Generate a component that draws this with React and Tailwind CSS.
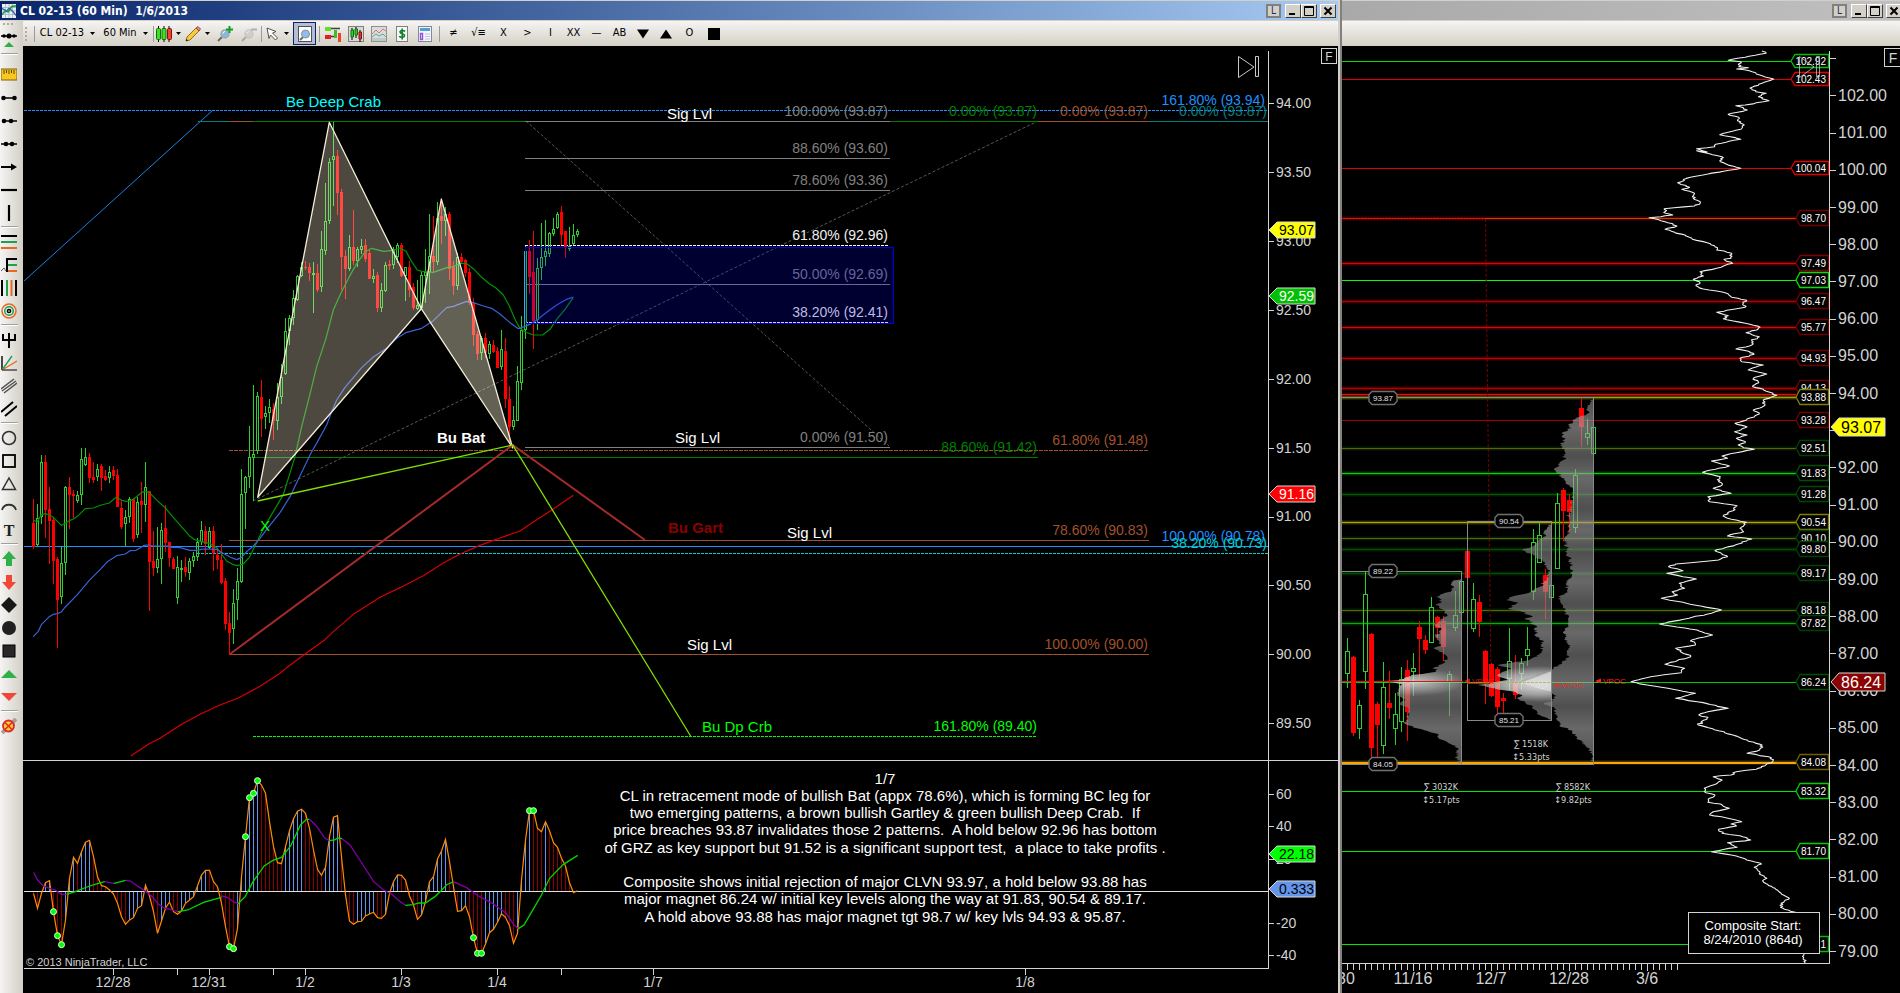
import React from "react";

/* ---------------------------------------------------------------- data */

// Hourly candles: direction, high, low, body top, body bottom (thirds of a pixel).
const EARLY = `r 297 447 370 440|g 313 438 353 435|g 165 372 185 350|r 165 415 185 330|r 262 492 328 362|r 350 552 360 483|r 472 745 478 600|g 440 612 490 592|g 257 525 262 490|r 231 388 262 286|r 270 355 282 288|g 273 310 286 304|g 144 315 178 286|g 144 197 172 196|r 160 250 171 234|r 185 248 231 240|g 192 243 206 232|r 192 273 198 234|r 210 243 228 240|g 198 250 217 234|r 198 240 210 228|r 207 320 225 321|r 300 388 324 380|g 330 438 352 373|g 292 370 297 352|r 294 426 297 417|g 290 415 307 406|r 246 398 303 315|g 186 366 262 315|r 273 632 273 486|r 393 528 483 504|g 381 518 478 503|g 370 552 390 478|r 316 456 384 430|r 425 502 426 473|r 470 508 478 507|g 468 612 502 593|g 480 546 503 505|r 472 530 500 515|g 475 540 484 518|g 455 500 468 484|g 415 482 425 470|g 363 435 390 425|r 378 465 392 432|g 382 448 394 444|r 378 513 394 460|r 445 507 465 480|r 432 552 480 549|r 534 690 543 672|r 635 765 670 699|g 567 732 610 688|g 504 660 544 601|g 208 550 283 547|g 228 388 230 280|g 78 265 172 232`;
const LATE = `g 915 1263 1121 1133|g 937 1123 949 1114|r 900 1070 951 1018|g 978 1047 1000 1012|g 957 1030 982 1000|r 968 1080 986 1022|g 910 1050 952 1024|g 852 972 892 952|g 714 885 754 883|g 705 795 714 754|g 630 735 655 715|g 585 662 587 660|g 547 592 560 587|r 543 570 560 564|r 548 603 562 580|g 547 698 578 582|r 552 635 578 630|g 453 635 508 620|g 309 524 424 512|g 235 432 247 424|g 125 378 229 239|r 210 405 228 338|r 327 630 336 530|r 510 657 528 568|g 465 572 501 567|r 390 556 501 543|g 502 562 508 542|g 477 523 499 509|r 477 545 494 537|r 508 597 518 597|g 567 608 588 596|r 575 695 585 683|g 609 695 630 683|g 546 636 555 634|r 540 570 553 557|g 500 567 506 554|g 490 549 495 530|r 490 590 495 587|g 560 662 562 587|r 543 650 562 629|r 608 690 621 684|g 600 690 676 686|g 577 685 586 684|g 507 668 576 587|g 402 641 529 577|r 408 575 528 546|g 366 555 415 547|r 357 492 407 422|g 380 468 402 424|r 397 600 402 566|r 543 645 561 618|g 520 630 530 617|r 520 552 531 546|r 537 590 540 578|r 564 675 576 668|r 654 798 668 765|r 753 839 762 822|g 768 840 774 820|r 760 835 774 820|g 783 836 793 821|r 780 818 795 816|r 801 864 813 864|g 750 869 808 860|r 774 985 812 958|r 918 1092 957 1042|g 978 1049 1021 1040|g 857 1022 904 1022|g 708 930 751 908|g 498 778 514 750|r 480 641 514 591|r 453 807 577 723|g 535 750 564 721|g 429 600 532 563|g 420 558 513 532|g 455 531 458 521|g 414 468 447 463|g 396 447 403 443|r 378 495 396 465|r 452 534 454 500|g 441 513 499 508|g 432 495 466 491|g 447 470 454 466`;
const DAILY = `g 773 924 813 883|r 827 1068 830 1058|g 960 1077 976 1048|g 575 927 643 877|r 758 1135 762 1103|r 965 1135 971 1036|g 847 1122 922 1099|r 872 1018 969 984|g 940 1095 1003 1048|g 862 1056 897 1027|r 840 1083 870 995|g 818 947 864 875|r 724 893 741 777|r 765 821 780 809|g 652 790 682 788|r 707 780 711 744|r 709 843 723 800|g 873 1007 882 906|g 634 752 706 745|g 592 712 604 700|r 447 627 513 595|g 609 757 658 748|r 646 770 666 726|r 810 971 813 905|r 848 952 852 948|r 860 1003 867 981|r 940 1000 953 962|g 744 930 843 898|r 826 957 906 945|g 834 931 850 883|g 741 857 808 827|g 447 659 487 637|g 427 550 465 548|r 568 717 585 635|g 612 660 616 655|g 340 567 370 566|r 324 483 330 393|r 342 453 360 395|g 267 458 286 443|r 53 200 83 140|g 117 195 160 175|g 131 239 142 223`;

const OSC = [460, 505, 460, 428, 422, 515, 587, 614, 540, 415, 352, 370, 335, 307, 301, 350, 410, 437, 440, 450, 462, 490, 530, 553, 540, 533, 505, 497, 436, 468, 515, 580, 543, 505, 486, 515, 523, 513, 490, 480, 470, 438, 405, 391, 391, 425, 440, 490, 560, 620, 626, 565, 410, 290, 173, 160, 122, 135, 160, 245, 320, 368, 371, 320, 272, 236, 214, 208, 220, 265, 330, 388, 406, 382, 290, 232, 227, 350, 465, 543, 553, 545, 544, 528, 522, 517, 533, 535, 523, 460, 425, 405, 406, 420, 468, 495, 538, 525, 485, 425, 410, 357, 333, 298, 365, 440, 514, 512, 497, 530, 593, 640, 640, 612, 578, 568, 547, 521, 532, 557, 610, 580, 420, 300, 212, 212, 265, 275, 245, 272, 308, 322, 355, 378, 428, 458, 452];
const OSC_DOTS = [5, 6, 7, 49, 50, 53, 54, 55, 56, 110, 111, 112, 124, 125];

const TREND = [
  ["#8000a8", "85,397 95,420 108,436 125,445 140,450 155,463 168,463"],
  ["#00d800", "168,463 190,455 220,441 240,433 265,425"],
  ["#8000a8", "265,425 288,430"],
  ["#00d800", "288,430 318,421"],
  ["#8000a8", "318,421 330,423 350,440 370,455 385,470 400,492 415,504 430,508 450,515"],
  ["#00d800", "450,515 475,510 515,487 560,472"],
  ["#8000a8", "560,468 575,472 590,485 602,491"],
  ["#00d800", "602,491 620,470 640,425 668,378 690,361 712,352 735,318 760,255 775,238 783,238"],
  ["#8000a8", "783,238 800,258 822,295 833,302"],
  ["#00d800", "833,302 845,300 855,294 865,296"],
  ["#8000a8", "865,296 885,315 910,360 945,425 970,450 990,462 1010,483 1025,496"],
  ["#00d800", "1025,496 1045,494 1060,489 1076,489 1100,470 1115,453 1130,434 1147,425"],
  ["#8000a8", "1147,425 1180,443 1210,468 1245,490 1280,520 1300,555 1311,566"],
  ["#00d800", "1311,566 1325,555 1345,515 1368,468 1390,415 1425,373 1461,346"],
];

const GRAY = "#808080";
const SIENNA = "#a0522d";
const GREEN = "#008000";
const TEAL = "#008080";
const DODGER = "#1e90ff";
const CYAN = "#00ced1";
const LIME = "#00ff00";

// Horizontal levels: x1, x2, y, colour, dash
const LEVELS = [
  [24, 1268, 110, DODGER, "3 1"],
  [198, 229, 121, TEAL],
  [229, 253, 121, SIENNA],
  [253, 525, 121, GREEN],
  [525, 890, 121, GRAY],
  [890, 1038, 121, GREEN],
  [1038, 1149, 121, SIENNA],
  [1149, 1268, 121, TEAL],
  [525, 890, 158, GRAY],
  [525, 890, 190, GRAY],
  [525, 888, 245, "#ffffff", "3 1"],
  [525, 890, 284, GRAY],
  [525, 888, 322, "#ffffff", "3 1"],
  [525, 890, 447, GRAY],
  [229, 1149, 450, SIENNA, "4 1"],
  [253, 1038, 457, GREEN],
  [229, 1149, 540, SIENNA],
  [24, 1268, 546, DODGER],
  [197, 1268, 553, CYAN, "3 1"],
  [230, 1149, 654, SIENNA],
  [253, 1037, 736, LIME, "3 1"],
];

const LEVEL_LABELS = [
  [1265, 105, DODGER, "161.80% (93.94)"],
  [888, 116, GRAY, "100.00% (93.87)"],
  [1037, 116, GREEN, "0.00% (93.87)"],
  [1148, 116, SIENNA, "0.00% (93.87)"],
  [1267, 116, TEAL, "0.00% (93.87)"],
  [888, 153, GRAY, "88.60% (93.60)"],
  [888, 185, GRAY, "78.60% (93.36)"],
  [888, 240, "#f0f0f0", "61.80% (92.96)"],
  [888, 279, "#66669a", "50.00% (92.69)"],
  [888, 317, "#bcbce4", "38.20% (92.41)"],
  [888, 442, GRAY, "0.00% (91.50)"],
  [1037, 452, GREEN, "88.60% (91.42)"],
  [1148, 445, SIENNA, "61.80% (91.48)"],
  [1148, 535, SIENNA, "78.60% (90.83)"],
  [1265, 541, DODGER, "100.00% (90.78)"],
  [1267, 548, CYAN, "38.20% (90.73)"],
  [1148, 649, SIENNA, "100.00% (90.00)"],
  [1037, 731, LIME, "161.80% (89.40)"],
];

const NOTES = [
  [286, 107, "#00ffff", "Be Deep Crab"],
  [667, 119, "#ffffff", "Sig Lvl"],
  [675, 443, "#ffffff", "Sig Lvl"],
  [787, 538, "#ffffff", "Sig Lvl"],
  [687, 650, "#ffffff", "Sig Lvl"],
  [437, 443, "#ffffff", "Bu Bat", true],
  [668, 533, "#8b0000", "Bu Gart", true],
  [702, 732, LIME, "Bu Dp Crb"],
  [260, 531, LIME, "X"],
];

const COMMENT = [
  [784, "1/7"],
  [801, "CL in retracement mode of bullish Bat (appx 78.6%), which is forming BC leg for"],
  [818, "two emerging patterns, a brown bullish Gartley & green bullish Deep Crab.\u00a0 If"],
  [835, "price breaches 93.87 invalidates those 2 patterns.\u00a0 A hold below 92.96 has bottom"],
  [853, "of GRZ as key support but 91.52 is a significant support test,\u00a0 a place to take profits ."],
  [887, "Composite shows initial rejection of major CLVN 93.97, a hold below 93.88 has"],
  [904, "major magnet 86.24 w/ initial key levels along the way at 91.83, 90.54 & 89.17."],
  [922, "A hold above 93.88 has major magnet tgt 98.7 w/ key lvls 94.93 & 95.87."],
];

// Composite levels: y, price, line colour, glow colour, tag colour
const COMPOSITE = [
  [61, "102.92", "#00e000", null, "#00c000"],
  [79, "102.43", "#e00000", null, "#e00000"],
  [168, "100.04", "#e00000", null, "#e00000"],
  [218, "98.70", "#a85000", "#700000", "#700000"],
  [263, "97.49", "#e00000", "#700000", "#800000"],
  [280, "97.03", "#00ff00", null, "#00e000"],
  [301, "96.47", "#b00000", "#600000", "#700000"],
  [327, "95.77", "#e80000", "#600000", "#700000"],
  [358, "94.93", "#c00000", "#600000", "#700000"],
  [388, "94.13", "#b00000", "#700000", "#700000"],
  [394, null, "#ff0000", "#500000", null],
  [397, "93.88", "#a8a000", "#606000", "#808000"],
  [420, "93.28", "#a00000", null, "#700000"],
  [448, "92.51", "#6a5c00", "#003000", "#004000"],
  [473, "91.83", "#00d800", "#005000", "#005000"],
  [494, "91.28", "#005c00", "#003000", "#004800"],
  [522, "90.54", "#b0a800", "#505000", "#808000"],
  [538, "90.10", "#6a5c00", "#003000", "#004000"],
  [549, "89.80", "#005000", "#003000", "#004000"],
  [573, "89.17", "#005000", "#003000", "#004000"],
  [610, "88.18", "#6a5c00", "#003000", "#004000"],
  [623, "87.82", "#00b000", "#004000", "#004000"],
  [682, "86.24", "#00d000", null, "#005000"],
  [762, "84.08", "#ffa500", "#605000", "#706000"],
  [791, "83.32", "#00e800", null, "#00d000"],
  [851, "81.70", "#00e800", null, "#00d000"],
  [944, "79.21", "#00e800", null, "#00c000"],
];

// Volume profile outlines: x, y pairs, in the candle pane's drawing units.
const PROFILES = [
  [340, "340,595 315,605 310,635 270,650 285,665 268,675 290,690 300,705 275,725 262,735 285,745 268,770 285,795 262,805 290,818 300,835 290,850 265,862 270,875 200,885 170,900 130,903 170,912 165,935 160,945 185,960 165,972 190,985 195,1005 180,1030 215,1045 275,1062 275,1072 300,1085 315,1095 330,1110 325,1130 335,1150"],
  [593, "593,430 575,450 568,475 545,495 510,510 540,525 570,545 585,570 580,595 560,620 530,638 480,650 465,660 500,668 470,685 510,695 540,710 520,715 545,735 550,770 570,785 560,820 530,840 440,855 480,865 440,885 470,900 385,915 430,925 490,935 510,945 495,955 540,980 560,1005 593,1020"],
  [709, "709,55 695,80 690,105 650,120 640,150 620,160 630,185 615,190 630,215 625,240 600,270 620,290 640,315 655,330 650,365 640,400 640,450 630,480 640,530 650,570 640,600 630,640 612,650 630,690 640,720 640,740 625,755 640,800 635,840 590,870 550,885 505,905 520,915 570,925 600,945 590,965 570,970 600,985 610,1010 615,1035 650,1055 670,1080 690,1100 705,1120 707,1150"],
];

const curve = (text, ox, oy, sx, sy) =>
  text.split(" ").map((p) => {
    const [x, y] = p.split(",").map(Number);
    return [ox + x / sx, oy + y / sy];
  });

const COMPOSITE_CURVE = [
  ...curve("1240,153 1250,160 1200,172 1160,181 1190,185 1185,200 1208,203 1180,207 1210,212 1235,225 1268,237 1240,250 1212,264 1225,275 1250,280 1232,290 1257,302 1200,315 1178,317 1205,330 1160,343 1185,352 1182,362 1198,375 1190,388 1160,397 1140,404 1165,410 1190,418 1130,433 1128,440 1085,446 1110,456 1085,452 1145,470 1140,482 1155,492 1190,505 1100,525 1070,532 1040,548 1068,562 1050,568 1080,580 1075,590 1094,607 1080,618 1008,626 1012,640 1028,645 1000,650 972,653 1010,665 1038,678 1010,688 1060,708 1075,718 1110,728", 1240, 0, 2.376, 3),
  ...curve("345,170 350,180 372,183 395,190 393,205 372,208 398,220 350,235 300,245 310,258 280,268 300,278 288,287 310,297 350,303 385,312 395,322 440,331 430,340 435,352 350,367 385,377 370,386 400,393 450,403 480,411 470,420 438,428 478,440 455,452 455,465 408,477 450,485 462,493 420,505 425,515 490,525 445,540 500,552 460,565 475,575 458,590 490,598 530,616 490,630 495,645 460,660 478,672 440,690", 1600, 190, 3, 3),
  ...curve("1106,130 1140,140 1105,155 1140,165 1110,175 1135,185 1115,195 1130,203 1160,208 1110,218 1070,228 1085,235 1040,243 1090,258 1060,265 1015,277 1065,290 1060,305 1070,315 1045,325 1095,340 1030,350 1035,365 1112,377 1100,392 1075,405 1085,415 1138,427 1120,445 1130,455 1085,468 1153,477 1115,492 1050,512 1085,530 1060,540 940,552 920,560 960,572 915,580 960,590 998,597 950,610 965,625 930,635 945,645 900,655 970,670 1068,690 1040,700 895,732 1000,750 1043,765 985,780 995,795 940,805 982,830 910,853 965,865 955,878 870,890 815,905 860,915 900,922 995,940 940,955 1000,965 1087,985 1030,995 1005,1005 1030,1012 1003,1035 1060,1052 1100,1065 1130,1078 1182,1095 1175,1110 1140,1120 1200,1130 1212,1142 1190,1157 1165,1168 1110,1175 1095,1185", 1340, 380, 2.8, 3),
  ...curve("1045,110 1070,120 1045,135 1020,145 1025,158 1050,165 1035,175 1030,187 1065,192 1090,205 1045,215 1035,225 1080,233 1125,245 1095,252 1110,258 1060,268 1070,280 1120,287 1150,300 1085,308 1112,322 1040,335 1095,345 1135,357 1180,372 1160,382 1175,395 1180,405 1195,415 1185,425 1218,445 1235,460 1258,475 1235,490 1240,505 1275,517 1300,640 1297,655 1303,668", 1340, 740, 2.8, 3),
];

/* ------------------------------------------------------------- helpers */

const noise = (n) => {
  const v = Math.sin(n * 12.9898) * 43758.5453;
  return (v - Math.floor(v)) * 2 - 1;
};

const roughen = (points, amount) => {
  const out = [];
  for (let i = 0; i < points.length - 1; i++) {
    const [x1, y1] = points[i];
    const [x2, y2] = points[i + 1];
    const steps = Math.max(1, Math.round(Math.abs(y2 - y1)));
    for (let s = 0; s < steps; s++) {
      const t = s / steps;
      const jitter = s === 0 ? 0 : noise(i * 31 + s) * amount;
      out.push([x1 + (x2 - x1) * t + jitter, y1 + (y2 - y1) * t]);
    }
  }
  out.push(points[points.length - 1]);
  return out;
};

const toPoints = (pts) => pts.map(([x, y]) => `${x.toFixed(1)},${y.toFixed(1)}`).join(" ");

const parse = (text) =>
  text.split("|").map((row) => {
    const [dir, ...n] = row.split(" ");
    return [dir === "g", ...n.map(Number)];
  });

function Candles({ data, x0, step, top, half }) {
  return parse(data).map(([up, h, l, t, b], i) => {
    const x = Math.round(x0 + step * i);
    const y = (v) => Math.round(top + v / 3);
    const bodyTop = y(t);
    const bodyH = Math.max(1, y(b) - bodyTop);
    const color = up ? "#32cd32" : "#ff0000";
    return (
      <g key={i} shapeRendering="crispEdges">
        {up ? (
          <>
            <rect x={x} y={y(h)} width="1" height={Math.max(0, bodyTop - y(h))} fill={color} />
            <rect x={x} y={y(b)} width="1" height={Math.max(0, y(l) - y(b))} fill={color} />
            <rect x={x - half + 0.5} y={bodyTop + 0.5} width={half * 2} height={Math.max(1, bodyH - 1)} fill="none" stroke={color} />
          </>
        ) : (
          <>
            <rect x={x} y={y(h)} width="1" height={Math.max(1, y(l) - y(h))} fill={color} />
            <rect x={x - half} y={bodyTop} width={half * 2 + 1} height={bodyH} fill={color} />
          </>
        )}
      </g>
    );
  });
}

function Flag({ x, y, width, half, fill, text, color, size }) {
  return (
    <g>
      <polygon
        points={`${x},${y} ${x + 8},${y - half} ${x + width},${y - half} ${x + width},${y + half} ${x + 8},${y + half}`}
        fill={fill}
        stroke="#d8d8d8"
      />
      <text x={x + 10} y={y + Math.round(size * 0.36)} fontSize={size} fill={color}>{text}</text>
    </g>
  );
}

/* -------------------------------------------------------- main chart */

function HourlyChart() {
  const oscX = (i) => 33 + i * 4;
  const oscY = (v) => 740 + v / 3;
  return (
    <svg viewBox="23 46 1315 947" className="block h-auto w-full bg-black font-['Liberation_Sans',Arial,sans-serif]" role="img" aria-label="CL 02-13 60 minute chart">
      {/* fibonacci anchors */}
      <g stroke="#585858" strokeDasharray="3 2" fill="none">
        <path d="M253 501 1038 121M526 121 889 446" />
      </g>
      <path d="M24 281 213 110" stroke="#1e80e0" />

      <g shapeRendering="crispEdges">
        {LEVELS.map(([x1, x2, y, c, dash], i) => (
          <line key={i} x1={x1} x2={x2} y1={y + 0.5} y2={y + 0.5} stroke={c} strokeDasharray={dash} />
        ))}
      </g>

      <Candles data={EARLY} x0={33} step={4} top={400} half={1} />
      <Candles data={LATE} x0={253} step={4} top={80} half={1} />

      {/* moving averages */}
      <g fill="none" strokeWidth="3.6" strokeLinejoin="round">
        <g transform="translate(0 400) scale(.33333)">
          <polyline stroke="#009400" points="100,362 112,365 124,344 136,341 148,345 160,352 184,376 196,370 208,362 220,357 232,349 256,326 280,324 304,315 328,309 348,292 364,300 376,304 388,303 400,298 424,278 436,274 448,278 472,302 496,324 520,352 544,380 568,407 582,418 604,425 628,430 650,443 664,462 680,483 700,494 712,497 730,492 748,472 772,424 790,386 850,284 885,170 905,80 928,-10 950,-100 978,-185 1000,-270 1020,-315 1048,-370 1072,-412 1096,-445 1115,-455 1150,-446 1180,-449 1200,-456 1218,-446 1235,-415 1252,-390 1265,-386 1300,-383 1340,-397 1360,-400 1380,-410 1400,-409 1420,-394 1445,-368 1468,-349 1488,-336 1510,-315 1528,-282 1546,-240 1560,-215 1576,-204 1600,-195 1628,-195 1650,-212 1670,-242 1695,-272 1720,-308" />
          <polyline stroke="#3a62d4" points="100,710 115,694 124,674 148,650 160,643 172,641 184,636 196,621 232,584 268,541 304,505 322,485 350,467 376,462 390,452 408,451 420,444 432,436 445,435 460,438 480,438 505,438 515,442 540,443 570,451 590,451 610,447 650,448 664,457 690,471 710,479 724,473 740,455 760,438 780,415 800,388 840,338 870,290 895,238 930,165 958,115 980,75 995,35 1010,0 1035,-38 1060,-67 1085,-97 1120,-129 1160,-155 1190,-185 1220,-203 1265,-215 1300,-238 1340,-277 1360,-281 1400,-296 1420,-292 1450,-282 1475,-275 1500,-258 1530,-232 1555,-214 1575,-221 1600,-232 1640,-263 1670,-285 1700,-302 1720,-309" />
          <polyline stroke="#d80000" points="392,1068 445,1033 480,1015 545,973 600,943 660,915 715,894 780,859 840,820 860,803 920,758 975,719 1000,695 1060,643 1140,592 1200,563 1270,527 1330,489 1380,462 1440,436 1500,414 1560,393 1600,366 1660,327 1720,286" />
        </g>
      </g>

      {/* harmonic patterns */}
      <g stroke="#f4ecd4" strokeWidth="1.3" strokeLinejoin="round">
        <polygon points="257.7,497.3 329.3,122.3 421.3,308.7" fill="#fff3d8" fillOpacity=".3" />
        <polygon points="421.3,308.7 441.3,199 512.7,448" fill="#fff8d8" fillOpacity=".39" />
      </g>
      <polyline points="230,654 512.7,445 645,540" fill="none" stroke="#a52a2a" strokeWidth="2" />
      <polyline points="257.7,501 512.7,445 690.6,736" fill="none" stroke="#80e000" strokeWidth="1.3" />

      <rect x="525.5" y="247.5" width="368" height="76" fill="#0000ff" fillOpacity=".19" stroke="#0000e0" />

      <g fontSize="14">
        {LEVEL_LABELS.map(([x, y, c, t], i) => (
          <text key={i} x={x} y={y} fill={c} textAnchor="end">{t}</text>
        ))}
      </g>
      <g fontSize="15">
        {NOTES.map(([x, y, c, t, bold], i) => (
          <text key={i} x={x} y={y} fill={c} fontWeight={bold ? 700 : 400}>{t}</text>
        ))}
      </g>

      {/* oscillator */}
      <g shapeRendering="crispEdges">
        {OSC.map((v, i) => {
          const y = Math.round(oscY(v));
          const rising = i > 0 && v < OSC[i - 1];
          return (
            <rect key={i} x={oscX(i)} y={Math.min(y, 891)} width="1" height={Math.abs(y - 891)} fill={rising ? "#6495ed" : "#8b0000"} />
          );
        })}
        <path d="M24 891.5H1269" stroke="#e0e0e0" />
      </g>
      <polyline points={OSC.map((v, i) => `${oscX(i) + 0.5},${oscY(v).toFixed(1)}`).join(" ")} fill="none" stroke="#ff8c00" strokeWidth="1.2" />
      <g transform="translate(0 740) scale(.39541 .33333)" fill="none">
        {TREND.map(([c, p], i) => (
          <polyline key={i} points={p} stroke={c} strokeWidth="1.3" vectorEffect="non-scaling-stroke" />
        ))}
      </g>
      {OSC_DOTS.map((i) => (
        <circle key={i} cx={oscX(i) + 0.5} cy={oscY(OSC[i])} r="3" fill="#00ff00" stroke="#e0ffe0" />
      ))}
      <g fontSize="15" fill="#ffffff" textAnchor="middle">
        {COMMENT.map(([y, t]) => (
          <text key={y} x="885" y={y}>{t}</text>
        ))}
      </g>

      {/* axes */}
      <g stroke="#d3d3d3" shapeRendering="crispEdges" fill="none">
        <path d="M23 760.5H1338M24 968.5H1269M1268.5 51V969" />
        {[103, 172, 241, 310, 379, 448, 517, 585, 654, 723, 794, 826, 859, 923, 955].map((y) => (
          <path key={y} d={`M1269 ${y + 0.5}h5`} />
        ))}
        {[113, 177, 209, 273, 305, 401, 497, 561, 653, 1025].map((x) => (
          <path key={x} d={`M${x + 0.5} 969v6`} />
        ))}
      </g>
      <g fontSize="14" fill="#d3d3d3">
        {["94.00", "93.50", "93.00", "92.50", "92.00", "91.50", "91.00", "90.50", "90.00", "89.50"].map((t, i) => (
          <text key={t} x="1276" y={108 + Math.round(i * 68.9)}>{t}</text>
        ))}
        {[[799, "60"], [831, "40"], [864, "20"], [928, "-20"], [960, "-40"]].map(([y, t]) => (
          <text key={t} x="1276" y={y}>{t}</text>
        ))}
        <g textAnchor="middle">
          {[[113, "12/28"], [209, "12/31"], [305, "1/2"], [401, "1/3"], [497, "1/4"], [653, "1/7"], [1025, "1/8"]].map(([x, t]) => (
            <text key={t} x={x} y="987">{t}</text>
          ))}
        </g>
      </g>
      <text x="26" y="966" fontSize="11" fill="#d3d3d3">© 2013 NinjaTrader, LLC</text>

      <Flag x={1269} y={230} width={46} half={8} fill="#ffff00" text="93.07" color="#000" size={14} />
      <Flag x={1269} y={296} width={46} half={8} fill="#00c000" text="92.59" color="#fff" size={14} />
      <Flag x={1269} y={494} width={46} half={8} fill="#ff0000" text="91.16" color="#fff" size={14} />
      <Flag x={1269} y={854} width={46} half={8} fill="#00ff00" text="22.18" color="#000" size={14} />
      <Flag x={1269} y={889} width={46} half={8} fill="#6495ed" text="0.333" color="#000" size={14} />

      <path d="M1238.5 56.5 1254 67 1238.5 77.5ZM1255.5 56.5h3v20h-3z" fill="none" stroke="#c8c8c8" />
      <rect x="1321.5" y="48.5" width="15" height="15" fill="none" stroke="#d3d3d3" />
      <text x="1329" y="61" fontSize="12" fill="#d3d3d3" textAnchor="middle">F</text>
    </svg>
  );
}

/* --------------------------------------------------- composite chart */

const SHADES = [0, 0.08, 0.16, 0.22, 0.3, 0.36, 0.42, 0.5, 0.56, 0.64, 0.7, 0.78, 0.84, 0.9, 1];

function Tag({ x, y, text }) {
  return (
    <g>
      <path d={`M${x + 3} ${y - 6.5}h22l3 3v7l-3 3h-22l-3-3v-7z`} fill="#000" stroke="#707070" strokeWidth="1.4" />
      <text x={x + 14} y={y + 3} fontSize="8" fill="#e0e0e0" textAnchor="middle">{text}</text>
    </g>
  );
}

function Poc({ x, y, opacity = 1 }) {
  return (
    <g fill="#ff2020" fillOpacity={opacity}>
      <path d={`M${x} ${y}l6-2.5v5z`} />
      <text x={x + 8} y={y + 3} fontSize="8">VPOC</text>
    </g>
  );
}

function CompositeChart() {
  return (
    <svg viewBox="1342 46 558 947" className="block h-auto w-full bg-black font-['Liberation_Sans',Arial,sans-serif]" role="img" aria-label="Composite volume profile chart">
      <defs>
        <linearGradient id="vol" gradientUnits="userSpaceOnUse" x1="0" y1="398" x2="0" y2="765">
          {SHADES.map((s, i) => (
            <stop key={s} offset={s} stopColor={i % 2 ? "#a8a8a8" : "#808080"} stopOpacity=".62" />
          ))}
        </linearGradient>
        <radialGradient id="poc" gradientUnits="userSpaceOnUse" cx="0" cy="0" r="1" gradientTransform="translate(1540 684) scale(60 18)">
          <stop offset="0" stopColor="#fff" stopOpacity=".8" />
          <stop offset=".6" stopColor="#fff" stopOpacity=".4" />
          <stop offset="1" stopColor="#fff" stopOpacity="0" />
        </radialGradient>
        <radialGradient id="poc2" gradientUnits="userSpaceOnUse" cx="0" cy="0" r="1" gradientTransform="translate(1415 682) scale(50 14)">
          <stop offset="0" stopColor="#fff" stopOpacity=".6" />
          <stop offset="1" stopColor="#fff" stopOpacity="0" />
        </radialGradient>
      </defs>

      {/* composite levels */}
      <g shapeRendering="crispEdges">
        {COMPOSITE.map(([y, , c, glow]) => (
          <g key={y}>
            {glow && <rect x="1342" y={y - 2} width="454" height="5" fill={glow} fillOpacity=".3" />}
            {glow && <rect x="1342" y={y - 1} width="454" height="3" fill={glow} fillOpacity=".55" />}
            <rect x="1342" y={y} width="454" height={y === 762 ? 2 : 1} fill={c} />
          </g>
        ))}
        <path d="M1342 218.5H1485" stroke="#e00000" strokeDasharray="2 1" />
      </g>
      <path d="M1485.5 219 1491 680" stroke="#7a0000" strokeDasharray="3 2" />

      {/* candles and volume profiles */}
      <Candles data={DAILY} x0={1347} step={6} top={380} half={2} />
      {PROFILES.map(([right, text], i) => {
        const edge = 1340 + right / 2.8;
        const pts = roughen(curve(text, 1340, 380, 2.8, 3), 2.5);
        const outline = `${edge.toFixed(1)},${pts[0][1].toFixed(1)} ${toPoints(pts.map(([x, y]) => [Math.min(x, edge), y]))} ${edge.toFixed(1)},${pts[pts.length - 1][1].toFixed(1)}`;
        return (
          <g key={i}>
            <polygon points={outline} fill="url(#vol)" />
            {i < 2 && <polygon points={outline} fill={i ? "url(#poc)" : "url(#poc2)"} />}
          </g>
        );
      })}
      <path d="M1520 683 1552 671V692Z" fill="#fff" fillOpacity=".5" />
      <g fill="none" stroke="#8a8a8a" shapeRendering="crispEdges">
        <path d="M1342 571.5H1461.5V764.5M1342 397.5H1593.5V764.5H1342" />
        <path d="M1467.5 521.5h84v199h-84z" />
      </g>
      <path d="M1342 681.5H1463" stroke="#e01010" shapeRendering="crispEdges" />
      <path d="M1467 683.5H1490" stroke="#c01010" shapeRendering="crispEdges" />
      <path d="M1467 682.5H1552" stroke="#a0a020" strokeOpacity=".6" strokeDasharray="3 1" shapeRendering="crispEdges" />
      <Poc x={1464} y={681} opacity={0.75} />
      <Poc x={1553} y={685} opacity={0.85} />
      <Poc x={1595} y={681} />
      <Tag x={1369} y={398} text="93.87" />
      <Tag x={1495} y={521} text="90.54" />
      <Tag x={1369} y={571} text="89.22" />
      <Tag x={1369} y={764} text="84.05" />
      <Tag x={1495} y={720} text="85.21" />

      <g fontSize="9" fill="#d3d3d3" textAnchor="middle" className="font-['DejaVu_Sans_Condensed','DejaVu_Sans',sans-serif]">
        <text x="1531" y="747">∑ 1518K</text>
        <text x="1531" y="760">↕5.33pts</text>
        <text x="1441" y="790">∑ 3032K</text>
        <text x="1441" y="803">↕5.17pts</text>
        <text x="1573" y="790">∑ 8582K</text>
        <text x="1573" y="803">↕9.82pts</text>
      </g>

      <polyline points={toPoints(roughen(COMPOSITE_CURVE, 2))} fill="none" stroke="#f0f0f0" strokeWidth="1.1" strokeLinejoin="round" />

      {/* level tags */}
      {COMPOSITE.filter((l) => l[1]).map(([y, t, , , c]) => {
        const left = t.length > 5 ? 1791 : 1796;
        const h = t.length > 5 ? 6.5 : 7.5;
        return (
          <g key={t}>
            <path d={`M${left} ${y}l4 ${-h}H1828.5V${y + h}H${left + 4}z`} fill="#000" stroke={c} strokeWidth="1.3" />
            <text x="1826" y={y + 4} fontSize="10" fill="#fff" textAnchor="end">{t}</text>
          </g>
        );
      })}
      <path d="M1799.5 56.5 1814 67 1799.5 77.5ZM1816.5 56.5h3v20h-3z" fill="none" stroke="#c8c8c8" strokeOpacity=".75" />

      <rect x="1688.5" y="912.5" width="131" height="41" fill="#000" stroke="#d3d3d3" />
      <g fontSize="13" fill="#ffffff" textAnchor="middle">
        <text x="1753" y="930">Composite Start:</text>
        <text x="1753" y="944">8/24/2010 (864d)</text>
      </g>

      {/* axes */}
      <g stroke="#d3d3d3" shapeRendering="crispEdges" fill="none">
        <path d="M1342 963.5H1830M1829.5 51V964" />
        {Array.from({ length: 25 }, (_, i) => (
          <path key={i} d={`M1830 ${Math.round(58.1 + i * 37.2) + 0.5}h6`} />
        ))}
        {Array.from({ length: 56 }, (_, i) => (
          <path key={i} d={`M${1347.5 + i * 6} 964v${i % 13 === 11 ? 7 : 6}`} />
        ))}
      </g>
      <g fontSize="16" fill="#d3d3d3">
        {Array.from({ length: 24 }, (_, i) => 102 - i)
          .filter((p) => p !== 93)
          .map((p) => (
            <text key={p} x="1838" y={Math.round(101 + (102 - p) * 37.2)}>{p.toFixed(2)}</text>
          ))}
        <g textAnchor="middle">
          <text x="1346" y="984">30</text>
          <text x="1413" y="984">11/16</text>
          <text x="1491" y="984">12/7</text>
          <text x="1569" y="984">12/28</text>
          <text x="1647" y="984">3/6</text>
        </g>
      </g>
      <Flag x={1831} y={427} width={54} half={9} fill="#ffff00" text="93.07" color="#000" size={16} />
      <Flag x={1831} y={682} width={54} half={9} fill="#8b0000" text="86.24" color="#fff" size={16} />
      <rect x="1884.5" y="48.5" width="20" height="18" fill="none" stroke="#d3d3d3" />
      <text x="1893" y="63" fontSize="14" fill="#d3d3d3" textAnchor="middle">F</text>
    </svg>
  );
}

/* ------------------------------------------------------------ chrome */

const CAP = "flex h-3.5 w-4 items-center justify-center border border-t-white border-r-[#404040] border-b-[#404040] border-l-white bg-[#d4d0c8]";

function WindowControls() {
  return (
    <div className="flex items-center">
      <button aria-label="Link" className="mr-1 flex h-3.5 w-[15px] items-center justify-center border-2 border-[#808080] bg-[#d4d0c8] text-[10px] leading-none text-[#203050]">L</button>
      <button aria-label="Minimize" className={CAP}>
        <svg width="12" height="10"><path d="M2 8h6" stroke="#000" strokeWidth="2" /></svg>
      </button>
      <button aria-label="Maximize" className={CAP}>
        <svg width="12" height="10"><path d="M1.5 .5h9v9h-9zM1 1.5h10" fill="none" stroke="#000" /></svg>
      </button>
      <button aria-label="Close" className={`ml-[3px] ${CAP}`}>
        <svg width="12" height="10"><path d="M2.5 1.5l7 7M9.5 1.5l-7 7" stroke="#000" strokeWidth="2" /></svg>
      </button>
    </div>
  );
}

function Sep() {
  return <span className="mx-px h-4 w-px shrink-0 bg-[#9a9a9a]" />;
}

function Caret() {
  return <svg width="6" height="4" className="shrink-0"><path d="M0 0h5L2.5 3z" fill="#000" /></svg>;
}

function Tool({ label, className = "", children }) {
  return (
    <button aria-label={label} className={`flex h-[23px] shrink-0 items-center justify-center ${className}`}>
      {children}
    </button>
  );
}

function Ico({ children, size = 16 }) {
  return <svg width={size} height={size} viewBox="0 0 16 16" className="shrink-0" fill="none">{children}</svg>;
}

function Magnifier({ faded }) {
  return (
    <g opacity={faded ? 0.45 : 1}>
      <path d="M1 15l4-4" stroke="#706858" strokeWidth="2" />
      <circle cx="8" cy="8" r="4" fill={faded ? "#b8b8b8" : "#88b8e0"} stroke="#a0a8b0" strokeWidth="1.4" />
      <path d="M6 7.5a2 2 0 012-2" stroke="#fff" />
    </g>
  );
}

function TopToolbar() {
  return (
    <div className="flex h-[25px] items-center overflow-hidden bg-linear-to-b from-[#f6f5f3] to-[#d4d0c6] text-[11px] text-black">
      <svg width="10" height="18" className="shrink-0" fill="#b0aca4"><path d="M2 2h2v2H2zM2 6h2v2H2zM2 10h2v2H2zM2 14h2v2H2z" /></svg>
      <Sep />
      <Tool label="Instrument" className="w-16 gap-1.5">CL 02-13 <Caret /></Tool>
      <Tool label="Interval" className="w-[52px] gap-1.5">60 Min <Caret /></Tool>
      <Sep />
      <Tool label="Chart style" className="w-7 gap-1">
        <Ico><path d="M2.5 0v16M8 0v16M13 0v16" stroke="#000" /><rect x=".5" y="2.5" width="4" height="11" rx="1" fill="#40e020" stroke="#107010" /><rect x="6" y="2.5" width="4" height="11" rx="1" fill="#40e020" stroke="#107010" /><rect x="11.5" y="2.5" width="4" height="11" rx="1" fill="#f04030" stroke="#801010" /></Ico>
        <Caret />
      </Tool>
      <Tool label="Drawing tools" className="w-[29px] gap-1">
        <Ico><path d="M1 15l1-4L11 2l3 3-9 9z" fill="#f8c840" stroke="#907020" /><path d="M11 2l2-1.5 2.5 2.5L14 5z" fill="#f08080" stroke="#905050" /><path d="M1 15l.5-2 1.5 1.5z" fill="#000" /></Ico>
        <Caret />
      </Tool>
      <Tool label="Zoom in" className="w-[25px]"><Ico><Magnifier /><path d="M12.5 0v7M9 3.5h7" stroke="#10a020" strokeWidth="2" /></Ico></Tool>
      <Tool label="Zoom out" className="w-[23px]"><Ico><Magnifier faded /><path d="M10 3.5h6" stroke="#b0b0b0" strokeWidth="2" /></Ico></Tool>
      <Sep />
      <Tool label="Cursor" className="mr-0.5 w-7 gap-1">
        <Ico><path d="M3 2l9 3.500-3.500 1.500 5 5-2 2-5-5L5 12.500z" fill="#fff" stroke="#505050" /></Ico>
        <Caret />
      </Tool>
      <Tool label="Data box" className="mr-0.5 w-[23px] border border-[#0a246a] bg-[#b6bdd2]">
        <Ico><rect x="1.5" y=".5" width="13" height="15" fill="#fff" stroke="#505050" /><path d="M3 14l3-3" stroke="#706858" strokeWidth="2" /><circle cx="8.5" cy="8" r="4" fill="#90c0e8" stroke="#8090a0" /></Ico>
      </Tool>
      <Sep />
      <Tool label="Chart trader" className="w-[23px]">
        <Ico><path d="M0 1h6v4H0z" fill="#60e020" /><path d="M0 9h6v4H0z" fill="#e02020" /><path d="M6 2.5h9M6 10.5h6" stroke="#404040" strokeWidth="1.5" /><path d="M9 4h3v8H9z" fill="#40c020" /><path d="M13 7h3v9h-3z" fill="#f04030" /></Ico>
      </Tool>
      <Tool label="Bars" className="w-[23px]">
        <Ico><rect x=".5" y=".5" width="15" height="15" fill="#d8d8d8" stroke="#808080" /><path d="M4 2v12M8 1v11M12 4v12" stroke="#000" /><path d="M3 4h2.5v7H3zM7 3h2.5v6H7z" fill="#30d020" stroke="#107010" /><path d="M11 6h2.5v7H11z" fill="#f03020" stroke="#801010" /></Ico>
      </Tool>
      <Tool label="Indicators" className="w-[23px]">
        <Ico><rect x=".5" y=".5" width="15" height="15" fill="#d8dcdc" stroke="#909090" /><path d="M1 8l4-4 3 3 4-4 3 2" stroke="#e07070" /><path d="M1 11l4-3 3 2 4-2 3 3" stroke="#50b090" /><path d="M1 12h14v3H1z" fill="#c0c8c8" /></Ico>
      </Tool>
      <Tool label="Strategies" className="w-[23px]">
        <Ico><rect x="2.5" y=".5" width="11" height="15" fill="#f4f8f4" stroke="#808080" /><path d="M11 5.5C10 4 6 4 6 6s4.5 1.5 4.5 3.5S6 12 5.5 10M8.2 2.5v11" stroke="#108030" strokeWidth="1.6" /></Ico>
      </Tool>
      <Tool label="Properties" className="mr-0.5 w-[23px]">
        <Ico><rect x="1.5" y=".5" width="13" height="15" fill="#f4f4fc" stroke="#808898" /><path d="M3 2h10v3H3z" fill="#50a0d0" /><path d="M3.5 7.5h2v6h-2z" stroke="#9050e0" strokeWidth="1.4" /><path d="M8 8h5M8 10.5h5M8 13h5" stroke="#c0c0d8" /></Ico>
      </Tool>
      <Sep />
      <Tool label="Not equal" className="w-[25px]">≠</Tool>
      <Tool label="Formula" className="w-[25px]">√≡</Tool>
      <Tool label="X" className="w-[25px]">X</Tool>
      <Tool label="Greater" className="w-[23px]">&gt;</Tool>
      <Tool label="I" className="w-[23px]">I</Tool>
      <Tool label="XX" className="w-[23px]">XX</Tool>
      <Tool label="Line" className="w-[23px]">—</Tool>
      <Tool label="AB" className="w-[23px]">AB</Tool>
      <Tool label="Down" className="w-[23px]"><Ico size={12}><path d="M0 2h16L8 14z" fill="#000" /></Ico></Tool>
      <Tool label="Up" className="w-[23px]"><Ico size={12}><path d="M0 14h16L8 2z" fill="#000" /></Ico></Tool>
      <Tool label="O" className="w-[25px]">O</Tool>
      <Tool label="Block" className="w-[23px]"><span className="size-3 bg-black" /></Tool>
    </div>
  );
}

const K = "#000";
const SIDE_GROUPS = [
  [
    ["Ruler", <><rect x="0" y="2" width="16" height="11" fill="#f8c820" stroke="#806010" /><path d="M3 3v4M5.5 3v3M8 3v4M10.5 3v3M13 3v4" stroke="#604000" /></>],
    ["Line", <><path d="M2 8h12" stroke={K} strokeWidth="1.5" /><circle cx="2.5" cy="8" r="2.3" fill={K} /><circle cx="13.5" cy="8" r="2.3" fill={K} /></>],
    ["Ray", <><path d="M1 8h15" stroke={K} strokeWidth="1.5" /><circle cx="3" cy="8" r="2.3" fill={K} /><circle cx="10" cy="8" r="2.3" fill={K} /></>],
    ["Extended line", <><path d="M0 8h16" stroke={K} strokeWidth="1.5" /><circle cx="5" cy="8" r="2.3" fill={K} /><circle cx="11" cy="8" r="2.3" fill={K} /></>],
    ["Arrow line", <><path d="M0 8h12" stroke={K} strokeWidth="2" /><path d="M10 4.5l6 3.5-6 3.5z" fill={K} /></>],
    ["Horizontal line", <path d="M0 8h16" stroke={K} strokeWidth="2.2" />],
    ["Vertical line", <path d="M8 0v16" stroke={K} strokeWidth="2.2" />],
  ],
  [
    ["Retracement", <><path d="M0 2h16" stroke={K} strokeWidth="2" /><path d="M0 8h16" stroke="#20a050" strokeWidth="2" /><path d="M0 14h16" stroke="#e86820" strokeWidth="2" /></>],
    ["Extension", <><path d="M6 1v14M5 2h11" stroke={K} strokeWidth="2" /><path d="M7 8h9" stroke="#20a050" strokeWidth="2" /><path d="M7 14h9" stroke="#e86820" strokeWidth="2" /><path d="M0 14l3-3 2 3" stroke="#606060" /></>],
    ["Time extension", <><path d="M1 0v16M15 0v16" stroke={K} strokeWidth="2" /><path d="M6 0v16" stroke="#20a050" strokeWidth="2" /><path d="M10.5 0v16" stroke="#e86820" strokeWidth="2" /></>],
    ["Circle", <><circle cx="8" cy="8" r="7" stroke="#e86820" strokeWidth="1.5" /><circle cx="8" cy="8" r="4.3" stroke="#20a050" strokeWidth="1.5" /><circle cx="8" cy="8" r="1.6" stroke={K} strokeWidth="1.5" /></>],
  ],
  [
    ["Pitchfork", <path d="M2 2v6h12V2M8 1v15" stroke={K} strokeWidth="2" />],
    ["Gann fan", <><path d="M1 1v14" stroke={K} strokeWidth="1.4" /><path d="M1 15L11 1" stroke="#20a050" strokeWidth="1.4" /><path d="M1 15L16 6" stroke="#e86820" strokeWidth="1.4" /><path d="M1 15h15" stroke="#404040" strokeWidth="1.4" /></>],
    ["Regression channel", <path d="M0 11L13 1M1 13L15 3M3 15L16 5" stroke="#505050" strokeWidth="1.4" />],
    ["Trend channel", <path d="M0 11L12 1M4 15L16 5" stroke={K} strokeWidth="2" />],
  ],
  [
    ["Ellipse", <circle cx="8" cy="8" r="6.5" stroke="#303030" strokeWidth="1.6" />],
    ["Rectangle", <rect x="2" y="2" width="12" height="12" stroke={K} strokeWidth="1.8" />],
    ["Triangle", <path d="M8 2l6.5 11.5h-13z" stroke="#303030" strokeWidth="1.5" />],
    ["Arc", <path d="M1 11c2-7 12-7 14 0" stroke="#303030" strokeWidth="1.8" />],
    ["Text", <text x="8" y="14" fontSize="16" fontWeight="700" fill="#202020" textAnchor="middle" className="font-['Liberation_Serif',serif]">T</text>],
  ],
  [
    ["Arrow up", <path d="M8 0l7 8h-4v7H5V8H1z" fill="#30b048" />],
    ["Arrow down", <path d="M8 16l7-8h-4V1H5v7H1z" fill="#f04838" />],
    ["Diamond", <path d="M8 0l8 8-8 8-8-8z" fill="#181818" />],
    ["Dot", <circle cx="8" cy="8" r="7" fill="#202020" />],
    ["Square", <rect x="2" y="2" width="12" height="12" fill="#282828" stroke={K} />],
    ["Triangle up", <path d="M0 12h16L8 4z" fill="#30b048" />],
    ["Triangle down", <path d="M0 4h16l-8 8z" fill="#f04838" />],
  ],
  [["Remove drawings", <><path d="M1 15L15 1" stroke="#a8a098" strokeWidth="4" /><circle cx="7.5" cy="8" r="5.5" fill="#f8d030" stroke="#e02828" strokeWidth="1.8" /><path d="M4 4.5l7 7M11 4.5l-7 7" stroke="#e02828" strokeWidth="1.5" /></>]],
];

function SideSep() {
  return <span className="my-0.5 ml-px h-0.5 w-[17px] border-b border-b-white bg-[#a0a0a0]" />;
}

function SideToolbar() {
  return (
    <div className="flex w-[23px] shrink-0 flex-col bg-linear-to-r from-[#f5f4f2] to-[#d3cfc6]">
      <svg width="18" height="7" fill="#b0aca4"><path d="M3 2h2v2H3zM7 2h2v2H7zM11 2h2v2h-2z" /></svg>
      <Tool label="Drawing tools panel" className="w-[18px]">
        <Ico><path d="M0 4h16" stroke={K} strokeWidth="1.5" /><circle cx="3" cy="4" r="1.8" fill={K} /><circle cx="8" cy="4" r="2.5" fill={K} /><circle cx="13" cy="4" r="1.8" fill={K} /><path d="M8 10l5 5H3z" fill="#30b048" /></Ico>
      </Tool>
      <SideSep />
      <div className="h-1.5" />
      {SIDE_GROUPS.map((group, g) => (
        <React.Fragment key={g}>
          {g > 0 && <SideSep />}
          {group.map(([label, icon]) => (
            <Tool key={label} label={label} className="w-[18px]"><Ico>{icon}</Ico></Tool>
          ))}
        </React.Fragment>
      ))}
    </div>
  );
}

export default function App() {
  return (
    <main className="grid min-h-screen grid-cols-[minmax(0,1342fr)_minmax(0,558fr)] bg-black font-['DejaVu_Sans_Condensed','DejaVu_Sans',sans-serif]">
      <section className="flex flex-col border-r-2 border-[#808080]">
        <div className="flex grow flex-col border-r-2 border-[#d4d0c8]">
          <header className="flex h-[21px] items-center justify-between border-y border-[#d4d0c8] bg-linear-to-r from-[#0a246a] to-[#a6caf0] pr-0.5 pl-0.5">
            <h1 className="flex items-center gap-1 text-[12px] leading-4 font-bold whitespace-pre text-white">
              <Ico size={14}><rect width="16" height="16" fill="#e8f0f4" /><path d="M4 0v16M8 0v16M12 0v16M0 4h16M0 8h16M0 12h16" stroke="#a8b8c8" /><path d="M0 12l4-4 3 1 4-6 5-1" stroke="#20a040" strokeWidth="2" /><path d="M0 5l5 3 3-3 4 3 4 5" stroke="#3060b0" strokeWidth="1.5" /></Ico>
              {"CL 02-13 (60 Min)  1/6/2013"}
            </h1>
            <WindowControls />
          </header>
          <div className="flex grow">
            <SideToolbar />
            <div className="min-w-0 grow">
              <TopToolbar />
              <HourlyChart />
            </div>
          </div>
        </div>
      </section>
      <section className="overflow-hidden">
        <header className="flex h-[21px] items-center justify-end border-y border-[#d4d0c8] bg-linear-to-r from-[#a9a9a9] to-[#c0c0c0]">
          <div className="-mr-0.5"><WindowControls /></div>
        </header>
        <div className="h-[25px] bg-linear-to-b from-[#f6f5f3] to-[#d4d0c6]" />
        <CompositeChart />
      </section>
    </main>
  );
}
